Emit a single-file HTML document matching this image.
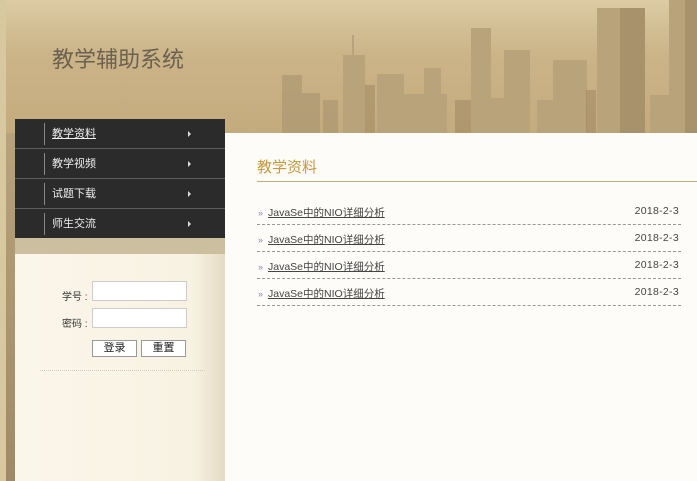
<!DOCTYPE html>
<html><head><meta charset="utf-8"><style>
*{margin:0;padding:0;box-sizing:border-box}
body{width:697px;height:481px;overflow:hidden;background:#fdfcf9;font-family:"Liberation Sans","Noto Sans CJK SC",sans-serif;position:relative}
.hdr{position:absolute;left:0;top:0;width:697px;height:133px;background:linear-gradient(180deg,#dccba4 0%,#cbb488 40%,#c4ab7e 100%)}
.strip{position:absolute;left:0;top:0;width:6px;height:481px;background:#d8c8a0}
.strip2{position:absolute;left:6px;top:133px;width:10px;height:348px;background:linear-gradient(180deg,#b7a27a,#9e8a66)}
.title{position:absolute;left:52px;top:42px;font-size:22px;color:#6b6150;font-family:"Noto Sans CJK SC",sans-serif}
.menu{position:absolute;left:15px;top:119px;width:210px;background:#2b2b2b}
.menu div{height:30px;border-bottom:1px solid #5e5e5e;position:relative;color:#eee;font-size:11px;line-height:30px;padding-left:37px}
.menu div:before{content:"";position:absolute;left:29px;top:4px;height:22px;border-left:1px solid #888}
.menu div:after{content:"";position:absolute;left:173px;top:12px;border-left:3px solid #ddd;border-top:3px solid transparent;border-bottom:3px solid transparent}
.menu div:last-child{border-bottom:0}
.band{position:absolute;left:15px;top:238px;width:210px;height:16px;background:#cbbf9f}
.side{position:absolute;left:15px;top:254px;width:210px;height:227px;background:linear-gradient(90deg,#faf6ea 0%,#f8f2e2 85%,#e5dbc3 100%)}
.lbl{position:absolute;font-size:10px;color:#333}
.inp{position:absolute;width:95px;height:20px;border:1px solid #ccc;background:#fff}
.btn{position:absolute;height:17px;border:1px solid #999;background:#fff;font-size:11px;text-align:center;line-height:15px;color:#222}
.dots{position:absolute;left:40px;top:370px;width:165px;border-top:1px dotted #ccc}
.main{position:absolute;left:225px;top:133px;width:472px;height:348px;background:#fdfcf9}
.h2{position:absolute;left:257px;top:156px;font-size:15px;color:#c39a3a}
.hl{position:absolute;left:257px;top:181px;width:440px;border-top:1px solid #c4ae7e}
.row{position:absolute;left:257px;width:424px;height:27px;border-bottom:1px dashed #999;font-size:10.5px;color:#444}
.row a{position:absolute;left:11px;top:7px;color:#444;text-decoration:underline}
.row i{position:absolute;left:1px;top:10px;font-style:normal;color:#8a8ab0;font-size:9px}
.row span{position:absolute;right:2px;top:7px;letter-spacing:.3px}
</style></head><body>
<div class="hdr">
<svg width="697" height="133" style="position:absolute;left:0;top:0">
<g fill="#a89470" opacity=".6">
<rect x="282" y="75" width="20" height="58"/><rect x="302" y="93" width="18" height="40"/>
<rect x="323" y="100" width="15" height="33"/>
</g>
<g fill="#b8a37a">
<rect x="343" y="55" width="22" height="78"/><rect x="352" y="35" width="2" height="20"/>
<rect x="377" y="74" width="27" height="59"/><rect x="403" y="94" width="44" height="39"/>
<rect x="424" y="68" width="17" height="30"/><rect x="471" y="28" width="20" height="105"/>
<rect x="482" y="98" width="22" height="35"/><rect x="504" y="50" width="26" height="83"/>
<rect x="537" y="100" width="16" height="33"/><rect x="553" y="60" width="34" height="73"/>
<rect x="597" y="8" width="48" height="125"/><rect x="650" y="95" width="22" height="38"/>
<rect x="669" y="0" width="28" height="133"/>
</g>
<g fill="#8f7a56" opacity=".4">
<rect x="365" y="85" width="10" height="48"/><rect x="455" y="100" width="16" height="33"/>
<rect x="586" y="90" width="10" height="43"/><rect x="620" y="8" width="25" height="125"/><rect x="685" y="0" width="12" height="133"/>
</g>
</svg>
</div>
<div class="strip"></div><div class="strip2"></div>
<div class="title">教学辅助系统</div>
<div class="menu"><div style="text-decoration:underline">教学资料</div><div>教学视频</div><div>试题下载</div><div>师生交流</div></div>
<div class="band"></div>
<div class="side"></div>
<div class="lbl" style="left:62px;top:288px">学号 :</div><div class="inp" style="left:92px;top:281px"></div>
<div class="lbl" style="left:62px;top:315px">密码 :</div><div class="inp" style="left:92px;top:308px"></div>
<div class="btn" style="left:92px;top:340px;width:45px">登录</div>
<div class="btn" style="left:141px;top:340px;width:45px">重置</div>
<div class="dots"></div>
<div class="main"></div>
<div class="h2">教学资料</div><div class="hl"></div>
<div class="row" style="top:198px"><i>»</i><a>JavaSe中的NIO详细分析</a><span>2018-2-3</span></div>
<div class="row" style="top:225px"><i>»</i><a>JavaSe中的NIO详细分析</a><span>2018-2-3</span></div>
<div class="row" style="top:252px"><i>»</i><a>JavaSe中的NIO详细分析</a><span>2018-2-3</span></div>
<div class="row" style="top:279px"><i>»</i><a>JavaSe中的NIO详细分析</a><span>2018-2-3</span></div>
</body></html>
